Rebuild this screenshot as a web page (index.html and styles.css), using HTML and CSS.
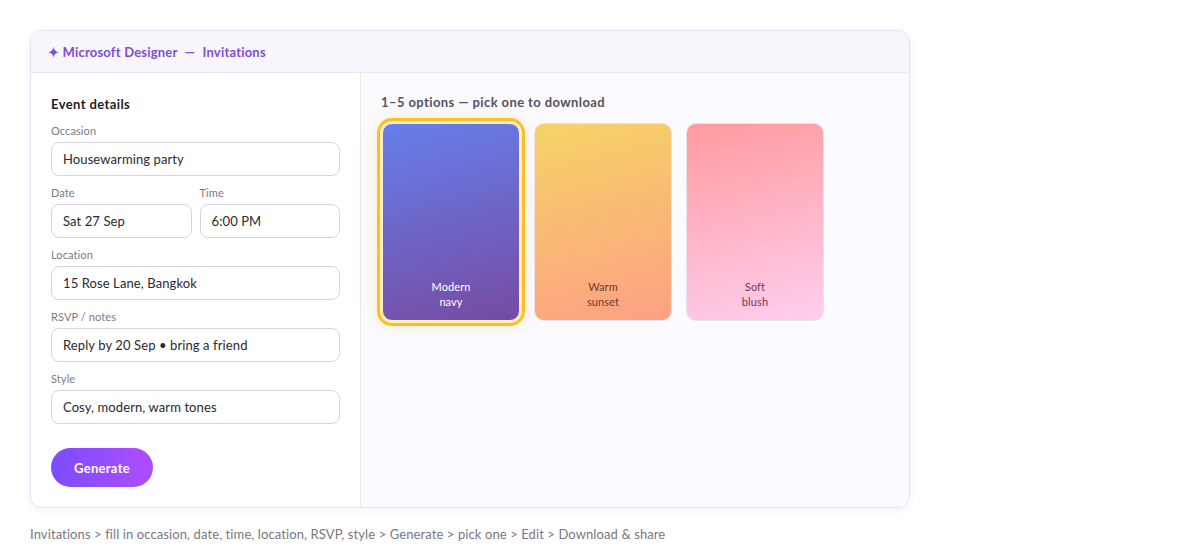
FILE: index.html
```html
<!DOCTYPE html>
<html lang="en">

<head>
    <meta charset="utf-8">
    <title>Microsoft Designer — Invitations</title>
    <link rel="stylesheet" href="styles.css">
</head>

<body>
    <div class="app">
        <div class="app_head">
            <span class="spark">✦</span> Microsoft Designer <span class="dash">—</span> Invitations
        </div>
        <div class="app_body">
            <!-- left: form -->
            <div class="form">
                <h2>Event details</h2>
                <div class="field">
                    <label>Occasion</label>
                    <div class="input">Housewarming party</div>
                </div>
                <div class="row">
                    <div class="field">
                        <label>Date</label>
                        <div class="input">Sat 27 Sep</div>
                    </div>
                    <div class="field">
                        <label>Time</label>
                        <div class="input">6:00 PM</div>
                    </div>
                </div>
                <div class="field">
                    <label>Location</label>
                    <div class="input">15 Rose Lane, Bangkok</div>
                </div>
                <div class="field">
                    <label>RSVP / notes</label>
                    <div class="input">Reply by 20 Sep • bring a friend</div>
                </div>
                <div class="field">
                    <label>Style</label>
                    <div class="input">Cosy, modern, warm tones</div>
                </div>
                <button class="btn_generate">Generate</button>
            </div>
            <!-- right: results -->
            <div class="results">
                <h3>1–5 options — pick one to download</h3>
                <div class="options">
                    <div class="option navy selected"><span>Modern<br>navy</span></div>
                    <div class="option sunset"><span>Warm<br>sunset</span></div>
                    <div class="option blush"><span>Soft<br>blush</span></div>
                </div>
            </div>
        </div>
    </div>
    <p class="flow">Invitations &gt; fill in occasion, date, time, location, RSVP, style &gt; Generate &gt; pick one &gt; Edit &gt; Download &amp; share</p>
</body>

</html>
```

FILE: styles.css
```css
body {
    margin: 0;
    padding: 30px;
    background: #fff;
    font-family: Lato, "Noto Sans", sans-serif;
    letter-spacing: 0.1px;
    color: #222;
}

.app {
    width: 878px;
    border: 1px solid #e6e3ec;
    border-radius: 12px;
    overflow: hidden;
    background: #fff;
    box-shadow: 0 2px 8px rgba(40, 20, 80, 0.06);
}

.app_head {
    height: 41px;
    line-height: 43px;
    padding: 0 17px;
    background: #f8f6fc;
    border-bottom: 1px solid #ebe7f2;
    color: #7c4fd3;
    font-size: 13px;
    font-weight: 700;
    letter-spacing: 0.2px;
}

.app_head .dash {
    margin: 0 4px;
}

.app_body {
    display: flex;
}

/* form column */
.form {
    width: 289px;
    padding: 21px 20px 20px;
    border-right: 1px solid #ebe7f2;
}

.form h2 {
    margin: 0 0 10px;
    font-size: 13px;
    font-weight: 700;
    line-height: 20px;
    letter-spacing: 0.4px;
    color: #1d1d1f;
}

.field {
    margin-bottom: 10px;
}

.field label {
    display: block;
    font-size: 11px;
    line-height: 14px;
    color: #7d7a85;
    margin-bottom: 4px;
}

.input {
    height: 32px;
    line-height: 33px;
    padding: 0 11px;
    border: 1px solid #d6d2e2;
    border-radius: 8px;
    font-size: 13px;
    color: #2a2a2e;
    white-space: nowrap;
}

.row {
    display: flex;
    gap: 8px;
}

.row .field {
    flex: 1;
}

.btn_generate {
    margin-top: 14px;
    width: 102px;
    height: 39px;
    border: 0;
    border-radius: 20px;
    background: linear-gradient(90deg, #7b4dff, #b04cff);
    color: #fff;
    font-family: inherit;
    font-size: 13px;
    font-weight: 700;
    letter-spacing: 0.3px;
}

/* results column */
.results {
    flex: 1;
    background: #fbfaff;
    padding: 19px 20px 20px 20px;
}

.results h3 {
    margin: 0 0 11px;
    font-size: 13px;
    font-weight: 700;
    line-height: 20px;
    letter-spacing: 0.4px;
    color: #55525c;
}

.options {
    display: flex;
    gap: 14px;
    padding-left: 1px;
}

.option {
    box-sizing: border-box;
    width: 138px;
    height: 198px;
    border: 1px solid #e7e2ee;
    border-radius: 10px;
    display: flex;
    align-items: flex-end;
    justify-content: center;
    text-align: center;
    font-size: 11px;
    line-height: 15px;
    padding-bottom: 11px;
}

/* picked card: cream gap, amber ring, soft glow */
.option.selected {
    border-color: #fdeec4;
    box-shadow: 0 0 0 2px #fdeec4, 0 0 0 5px #fbbf24, 0 0 14px 6px rgba(251, 191, 36, 0.22);
}

.navy {
    background: linear-gradient(165deg, #667eea, #764ba2);
    color: #fff;
}

.sunset {
    background: linear-gradient(165deg, #f6d365, #fda085);
    color: #6b3a2a;
}

.blush {
    background: linear-gradient(165deg, #ff9a9e, #fecfef);
    color: #7a3550;
}

.flow {
    margin: 18px 0 0;
    font-size: 13px;
    color: #7a7780;
}
```
